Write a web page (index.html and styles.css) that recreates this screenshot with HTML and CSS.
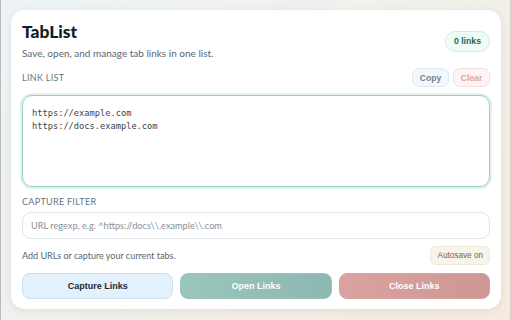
FILE: index.html
```html
<!DOCTYPE html>
<html>
<head>
<meta charset="utf-8">
<link rel="stylesheet" href="styles.css">
</head>
<body>
<div class="page">
  <main class="card">
    <header class="head">
      <div>
        <h1 class="title">TabList</h1>
        <p class="sub">Save, open, and manage tab links in one list.</p>
      </div>
      <span class="count">0 links</span>
    </header>
    <div class="section-row">
      <span class="label">LINK LIST</span>
      <div class="mini-actions">
        <button class="mini copy">Copy</button>
        <button class="mini clear">Clear</button>
      </div>
    </div>
    <textarea class="links" spellcheck="false">https://example.com
https://docs.example.com</textarea>
    <div class="label filter-label">CAPTURE FILTER</div>
    <input class="filter" type="text" placeholder="URL regexp, e.g. ^https://docs\\.example\\.com">
    <div class="status-row">
      <span class="hint">Add URLs or capture your current tabs.</span>
      <span class="autosave">Autosave on</span>
    </div>
    <div class="actions">
      <button class="btn capture">Capture Links</button>
      <button class="btn open">Open Links</button>
      <button class="btn close">Close Links</button>
    </div>
  </main>
</div>
</body>
</html>
```
FILE: styles.css
```css
html, body {
  margin: 0;
  height: 100%;
}
body {
  background: linear-gradient(135deg, #edf3f6 0%, #f1f0ec 50%, #f6ebde 100%);
  font-family: Lato, "Noto Sans", sans-serif;
  color: #1b2430;
  box-shadow: inset 1px 0 0 #b9bcbf, inset -2px 0 0 #d8d2c8;
}
.page {
  padding: 10px 11px 11px 11px;
  height: 100%;
  box-sizing: border-box;
}
.card {
  background: #fff;
  border-radius: 14px;
  box-shadow: 0 2px 8px rgba(90, 80, 60, 0.10);
  padding: 10px 11px 10px 11px;
  height: 100%;
  box-sizing: border-box;
  display: flex;
  flex-direction: column;
}
.head {
  display: flex;
  justify-content: space-between;
  align-items: flex-start;
}
.title {
  margin: 0;
  font-size: 17.4px;
  font-weight: 900;
  line-height: 24px;
  color: #141c28;
}
.sub {
  margin: 3px 0 0 0;
  font-size: 10px;
  line-height: 13px;
  color: #5b6570;
}
.count {
  margin-top: 11px;
  height: 21px;
  padding: 0 8px;
  border-radius: 11px;
  background: #effcf6;
  border: 1px solid #cdeedf;
  box-sizing: border-box;
  font-family: "Liberation Sans", Arial, sans-serif;
  font-weight: 700;
  font-size: 8.7px;
  line-height: 19px;
  color: #216a52;
}
.section-row {
  display: flex;
  justify-content: space-between;
  align-items: center;
  margin-top: 8px;
}
.label {
  font-size: 9px;
  letter-spacing: 0.3px;
  color: #6b737c;
}
.mini-actions {
  display: flex;
  gap: 4px;
}
.mini {
  height: 19px;
  width: 37px;
  padding: 0;
  border-radius: 7px;
  font-family: "Liberation Sans", Arial, sans-serif;
  font-weight: 700;
  font-size: 8.6px;
}
.copy {
  background: #f3f8fd;
  border: 1px solid #dde9f5;
  color: #75828f;
}
.clear {
  background: #fdf4f4;
  border: 1px solid #f6dede;
  color: #dda2a2;
}
.links {
  margin-top: 8px;
  height: 92px;
  box-sizing: border-box;
  resize: none;
  border: 1.5px solid #98cfc0;
  box-shadow: 0 0 0 2px #e3f2ee;
  border-radius: 10px;
  padding: 11px 9px 9px 9px;
  font-family: "DejaVu Sans Mono", monospace;
  font-size: 8.7px;
  line-height: 13px;
  color: #3b434c;
  outline: none;
}
.filter-label {
  margin-top: 9px;
}
.filter {
  margin-top: 5px;
  height: 27px;
  box-sizing: border-box;
  border: 1px solid #e2e6ea;
  border-radius: 9px;
  padding: 0 8px;
  font-family: Lato, "Noto Sans", sans-serif;
  font-size: 9.2px;
  color: #333;
  outline: none;
}
.filter::placeholder {
  color: #8a9099;
}
.status-row {
  display: flex;
  justify-content: space-between;
  align-items: center;
  margin-top: 7px;
}
.hint {
  font-size: 9px;
  color: #5b6570;
}
.autosave {
  height: 19px;
  box-sizing: border-box;
  padding: 0 6px;
  border-radius: 6px;
  background: #f9f4ea;
  border: 1px solid #f0e8d6;
  font-family: "Liberation Sans", Arial, sans-serif;
  font-size: 8.2px;
  line-height: 17px;
  color: #6e6755;
}
.actions {
  margin-top: 8px;
  display: grid;
  grid-template-columns: 1fr 1fr 1fr;
  gap: 7px;
}
.btn {
  height: 26px;
  border-radius: 8px;
  font-family: "Liberation Sans", Arial, sans-serif;
  font-weight: 700;
  font-size: 9px;
  padding: 0;
}
.capture {
  background: #e3f1fc;
  border: 1px solid #c9e0f2;
  color: #1d2833;
}
.open {
  background: linear-gradient(90deg, #9bc6bd, #8db7b1);
  border: 1px solid #9cc4bc;
  color: #fff;
}
.close {
  background: linear-gradient(90deg, #dba3a0, #cd9794);
  border: 1px solid #d8a29f;
  color: #fff;
}
```
